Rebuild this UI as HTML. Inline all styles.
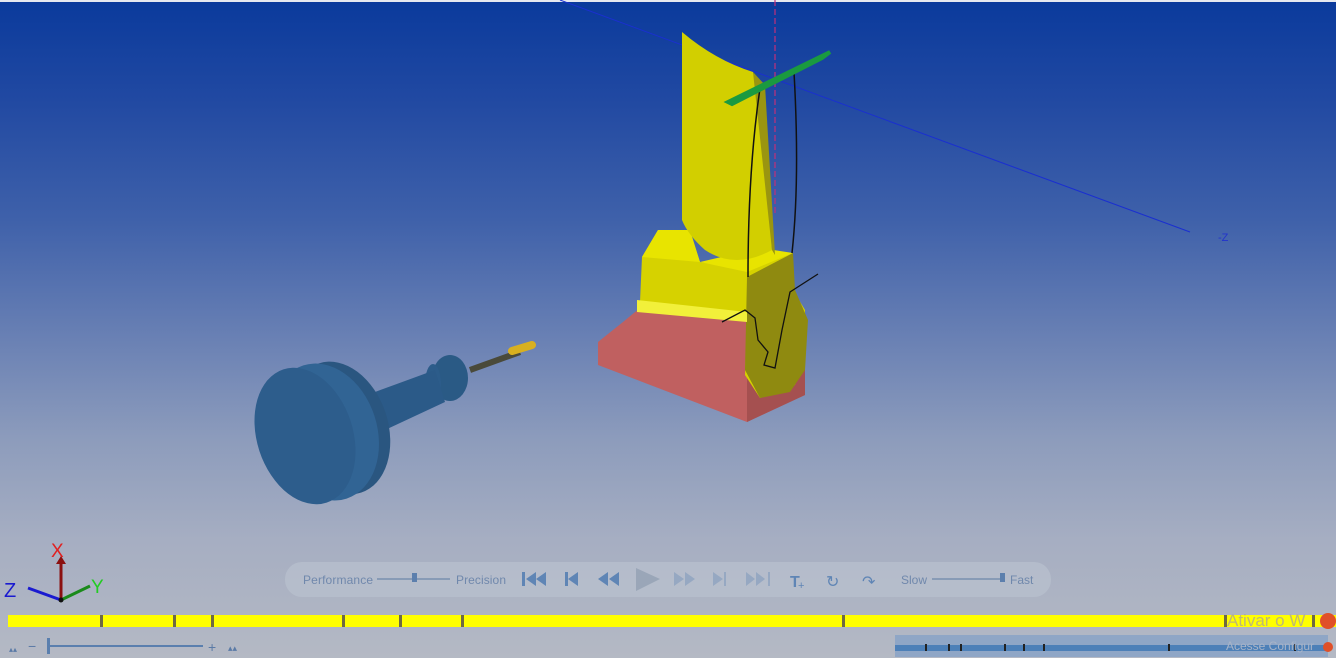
<!DOCTYPE html>
<html><head><meta charset="utf-8"><style>
html,body{margin:0;padding:0;width:1336px;height:658px;overflow:hidden;font-family:"Liberation Sans",sans-serif}
body{background:linear-gradient(#0a3a9c 0px,#2149a2 100px,#3f61aa 220px,#6a81b4 340px,#8d9cbc 440px,#a6aec2 540px,#b4b9c4 658px)}
.top{position:absolute;left:0;top:0;width:1336px;height:2px;background:#e6e9f0}
</style></head><body>
<div class="top"></div>
<svg width="1336" height="658" style="position:absolute;left:0;top:0">
<line x1="560" y1="0" x2="1190" y2="232" stroke="#1a2fd0" stroke-width="1"/>
<text x="1218" y="241" font-size="11" fill="#2233cc">-Z</text>
<line x1="775" y1="0" x2="775" y2="215" stroke="#c0307a" stroke-width="1.2" stroke-dasharray="6 3"/>
<polygon points="598,342 623,322 640,308 748,312 805,333 805,395 747,422 598,365" fill="#c06060"/>
<polygon points="747,330 805,333 805,395 747,422" fill="#a55050"/>
<polygon points="642,257 658,230 690,232 700,262 747,270 793,253 793,290 805,310 805,335 795,385 760,398 745,375 747,312 637,307 640,302" fill="#d6d200"/>
<polygon points="658,230 690,230 700,262 747,272 793,253 760,248 700,262 642,257" fill="#e8e400"/>
<polygon points="747,277 793,253 795,290 808,320 805,370 790,392 760,398 745,370" fill="#8f8a10"/>
<polygon points="637,300 747,312 747,322 637,312" fill="#f2f03a"/>
<path d="M682,32 Q715,60 753,72 L762,110 L772,250 Q735,270 705,250 Q688,235 682,220 Z" fill="#d2cf00"/>
<path d="M753,72 L765,85 L775,255 L772,250 Z" fill="#9a9510"/>
<path d="M760,88 Q748,170 748,277" stroke="#111" stroke-width="1.5" fill="none"/>
<path d="M794,72 Q800,180 792,253" stroke="#111" stroke-width="1.5" fill="none"/>
<path d="M722,322 L745,310 L755,318 L758,340 L768,352 L764,365 L775,368 L782,330 L790,292 L818,274" stroke="#111" stroke-width="1.3" fill="none"/>
<polygon points="728,102 830,52 822,58 732,104" fill="#2ccc55" stroke="#1a9a40" stroke-width="4"/>
<line x1="470" y1="370" x2="520" y2="352" stroke="#4a4a3a" stroke-width="6"/>
<line x1="512" y1="351" x2="532" y2="345" stroke="#d8b020" stroke-width="8" stroke-linecap="round"/>
<ellipse cx="450" cy="378" rx="18" ry="23" fill="#2a5a85"/>
<ellipse cx="433" cy="384" rx="8" ry="20" fill="#2c5c8a"/>
<polygon points="375,392 435,370 445,402 385,430" fill="#2b5a88"/>
<ellipse cx="340" cy="428" rx="48" ry="68" transform="rotate(-18 340 428)" fill="#2a5680"/>
<ellipse cx="325" cy="432" rx="52" ry="70" transform="rotate(-18 325 432)" fill="#316494"/>
<ellipse cx="305" cy="436" rx="48" ry="70" transform="rotate(-18 305 436)" fill="#2d5d8c"/>
<line x1="61" y1="600" x2="61" y2="562" stroke="#8b1010" stroke-width="3"/>
<polygon points="56,564 66,564 61,556" fill="#8b1010"/>
<text x="51" y="557" font-size="19" fill="#e02020">X</text>
<line x1="61" y1="600" x2="28" y2="588" stroke="#1a1ad0" stroke-width="3"/>
<text x="4" y="597" font-size="20" fill="#1a1ad0">Z</text>
<line x1="61" y1="600" x2="90" y2="586" stroke="#1a8a1a" stroke-width="3"/>
<text x="91" y="593" font-size="19" fill="#22cc22">Y</text>
<circle cx="61" cy="600" r="2.5" fill="#111"/>
<rect x="285" y="562" width="766" height="35" rx="17" fill="#b8c0ce" opacity="0.75"/>
<g font-size="12" fill="#7088ac">
<text x="303" y="584" textLength="70">Performance</text>
<text x="456" y="584" textLength="50">Precision</text>
<text x="901" y="584">Slow</text>
<text x="1010" y="584">Fast</text>
</g>
<line x1="377" y1="579" x2="450" y2="579" stroke="#7a90b0" stroke-width="1.5"/>
<rect x="412" y="573" width="5" height="9" fill="#5c7fad"/>
<line x1="932" y1="579" x2="1005" y2="579" stroke="#7a90b0" stroke-width="1.5"/>
<rect x="1000" y="573" width="5" height="9" fill="#5c7fad"/>
<g fill="#5f85b5">
<rect x="522" y="572" width="3" height="14"/><polygon points="536,572 526,579 536,586"/><polygon points="546,572 536,579 546,586"/>
<rect x="565" y="572" width="3" height="14"/><polygon points="578,572 568,579 578,586"/>
<polygon points="608,572 598,579 608,586"/><polygon points="619,572 609,579 619,586"/>
</g>
<polygon points="636,568 636,591 660,579" fill="#9aa6b8"/>
<g fill="#96a8c2">
<polygon points="674,572 684,579 674,586"/><polygon points="685,572 695,579 685,586"/>
<polygon points="713,572 723,579 713,586"/><rect x="724" y="572" width="2" height="14"/>
<polygon points="746,572 755,579 746,586"/><polygon points="756,572 765,579 756,586"/><rect x="768" y="572" width="2" height="14"/>
</g>
<g fill="#5f85b5"><text x="790" y="587" font-size="16" font-weight="bold">T</text><text x="798" y="589" font-size="11">+</text>
<text x="826" y="587" font-size="16">&#x21BB;</text><text x="862" y="587" font-size="16">&#x21B7;</text></g>
<rect x="8" y="615" width="1328" height="12" fill="#ffff00"/>
<g fill="#6f6a40">
<rect x="100" y="615" width="3" height="12"/><rect x="173" y="615" width="3" height="12"/><rect x="211" y="615" width="3" height="12"/>
<rect x="342" y="615" width="3" height="12"/><rect x="399" y="615" width="3" height="12"/><rect x="461" y="615" width="3" height="12"/>
<rect x="842" y="615" width="3" height="12"/><rect x="1224" y="615" width="3" height="12"/><rect x="1312" y="615" width="3" height="12"/>
</g>
<text x="1227" y="626" font-size="17" fill="#b0a890" opacity="0.8">Ativar o W</text>
<circle cx="1328" cy="621" r="8" fill="#e05028"/>
<g fill="#5a7aa6" font-size="14"><text x="9" y="652" font-size="8">▴▴</text><text x="28" y="651">−</text><text x="208" y="652">+</text><text x="228" y="651" font-size="9">▴▴</text></g>
<line x1="50" y1="646" x2="203" y2="646" stroke="#5a7fae" stroke-width="2"/>
<rect x="47" y="638" width="3" height="16" fill="#5a7fae"/>
<rect x="895" y="635" width="433" height="22" fill="#8fa6c6"/>
<rect x="895" y="645" width="433" height="6" fill="#4d80b8"/>
<g fill="#222"><rect x="925" y="644" width="2" height="7"/><rect x="948" y="644" width="2" height="7"/><rect x="960" y="644" width="2" height="7"/><rect x="1004" y="644" width="2" height="7"/><rect x="1023" y="644" width="2" height="7"/><rect x="1043" y="644" width="2" height="7"/><rect x="1168" y="644" width="2" height="7"/><rect x="1294" y="644" width="2" height="7"/></g>
<text x="1226" y="650" font-size="12" fill="#a8b4c8">Acesse Configur</text>
<circle cx="1328" cy="647" r="5" fill="#e05028"/>
</svg>
</body></html>
